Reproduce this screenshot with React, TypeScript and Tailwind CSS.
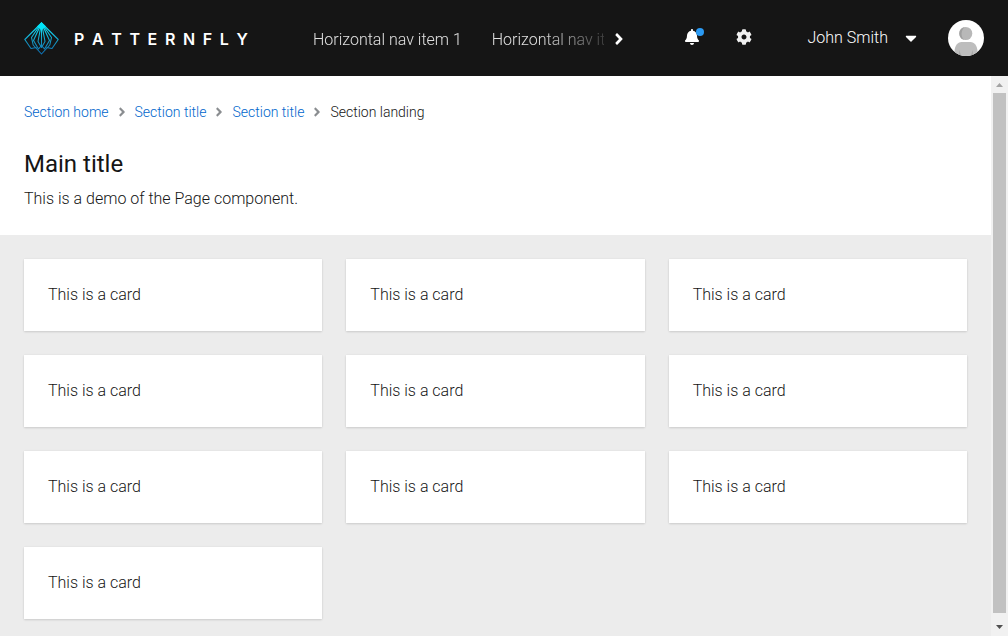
import React from "react";
import { FaAngleRight, FaBell, FaCaretDown, FaCog } from "react-icons/fa";

const crumbs = ["Section home", "Section title", "Section title"];
const navItems = ["Horizontal nav item 1", "Horizontal nav item 2"];
const cards = Array.from({ length: 10 }, (_, i) => i);

function Logo() {
  return (
    <a href="#home" aria-label="PatternFly" className="flex shrink-0 items-center gap-[15px] text-white">
      <svg width="35" height="34" viewBox="0 0 35 34" fill="none" stroke="url(#fan)" strokeWidth="1.1" strokeLinejoin="round" aria-hidden="true">
        <defs>
          <linearGradient id="fan" gradientUnits="userSpaceOnUse" x1="17.5" y1="0" x2="17.5" y2="34">
            <stop offset="0" stopColor="#00f0ff" />
            <stop offset="0.3" stopColor="#12cdea" />
            <stop offset="0.65" stopColor="#1590bd" />
            <stop offset="1" stopColor="#0b6fb8" />
          </linearGradient>
        </defs>
        <path d="M17.5 2 L0.8 18.5 L7 27.5 L12.5 26.5" />
        <path d="M17.5 2 L34.2 18.5 L28 27.5 L22.5 26.5" />
        <path d="M17.5 2 L7.5 16.5 L9.2 24 L17.5 33 L25.8 24 L27.5 16.5 Z" />
        <path d="M17.5 2 L9.5 19.5 L14.5 28 L17.5 24.5 L20.5 28 L25.5 19.5 Z" />
        <path d="M17.5 2 L14 20.5 L17.5 26.5 L21 20.5 Z" />
        <path d="M17.5 2 V26.5" />
        <path d="M17.5 1.2 L13 5.5 L17.5 9 L22 5.5 Z" fill="#00e4f8" stroke="none" />
      </svg>
      <span aria-hidden="true" className="flex w-[174px] justify-between pt-0.5 font-['Inter',sans-serif] text-base leading-6 font-semibold">
        {"PATTERNFLY".split("").map((c, i) => (
          <span key={i}>{c}</span>
        ))}
      </span>
    </a>
  );
}

function Avatar() {
  return (
    <svg className="size-9 shrink-0" viewBox="0 0 36 36" role="img" aria-label="John Smith">
      <defs>
        <clipPath id="round"><circle cx="18" cy="18" r="18" /></clipPath>
      </defs>
      <circle cx="18" cy="18" r="18" fill="#fff" />
      <g clipPath="url(#round)">
        <path d="M6.5 36 V31 C7 25.5 9.5 22 13.5 22 H22.5 C26.5 22 29 25.5 29.5 31 V36 Z" fill="#bdbdbd" />
        <path d="M11.5 30 L13 36 H11 Z M24.5 30 L25 36 H23 Z" fill="#a3a3a3" />
        <circle cx="17.7" cy="13.5" r="6.6" fill="#b8b8b8" />
        <path d="M17 7 A6.6 6.6 0 0 0 16 19.8 C12.5 16.5 12.8 10 17 7 Z" fill="#a0a0a0" />
      </g>
    </svg>
  );
}

function ScrollTrack() {
  return (
    <div aria-hidden="true" className="flex w-[17px] shrink-0 flex-col items-center bg-[#f1f1f1]">
      <svg width="17" height="17" viewBox="0 0 17 17"><path d="M5 11 L8.5 7 L12 11 Z" fill="#a3a3a3" /></svg>
      <div className="w-[13px] grow bg-[#c1c1c1]" />
      <svg width="17" height="23" viewBox="0 0 17 23"><path d="M5 12 H12 L8.5 16 Z" fill="#505050" /></svg>
    </div>
  );
}

export default function App() {
  return (
    <div className="flex h-screen flex-col bg-white font-['Roboto',sans-serif] text-base font-light text-[#151515]">
      <header className="flex h-19 shrink-0 items-center bg-[#151515] px-6 text-white">
        <Logo />
        <div className="ml-[65px] flex min-w-0 flex-1 items-center">
          <nav aria-label="Global" className="min-w-0 flex-1 overflow-hidden [mask-image:linear-gradient(to_left,rgb(0_0_0/0.2),black_64px)]">
            <ul className="flex gap-[30px] pt-1 whitespace-nowrap text-[#e0e0e0]">
              {navItems.map((item) => (
                <li key={item}><a href="#nav">{item}</a></li>
              ))}
            </ul>
          </nav>
          <button type="button" aria-label="Scroll right" className="flex w-[30px] shrink-0 justify-center pt-0.5"><FaAngleRight className="size-[18px]" /></button>
        </div>
        <div className="ml-[50px] flex shrink-0 items-center">
          <button type="button" aria-label="Notifications" className="relative mb-0.5">
            <FaBell className="size-4" />
            <span className="absolute -top-px -right-1 size-2 rounded-full bg-[#2b9af3]" />
          </button>
          <button type="button" aria-label="Settings" className="mb-0.5 ml-9 text-[#f0f0f0]"><FaCog className="size-4" /></button>
          <button type="button" className="ml-14 flex items-center gap-3.5 whitespace-nowrap">
            John Smith
            <FaCaretDown className="size-[18px]" />
          </button>
        </div>
        <div className="ml-7 shrink-0"><Avatar /></div>
      </header>
      <div className="flex min-h-0 flex-1">
        <main className="min-w-0 flex-1 overflow-y-auto bg-[#ececec] [scrollbar-width:none]">
          <section className="bg-white p-6">
            <nav aria-label="Breadcrumb">
              <ol className="flex flex-wrap items-center text-sm leading-6">
                {crumbs.map((c, i) => (
                  <li key={i} className="flex items-center">
                    <a href="#section" className="text-[#0066cc]">{c}</a>
                    <FaAngleRight className="mx-1.5 size-3.5 text-[#8a8d90]" aria-hidden="true" />
                  </li>
                ))}
                <li aria-current="page">Section landing</li>
              </ol>
            </nav>
            <h1 className="mt-6 text-2xl leading-8 font-normal">Main title</h1>
            <p className="mt-[7px] leading-6">This is a demo of the Page component.</p>
          </section>
          <section className="grid grid-cols-3 gap-6 p-6">
            {cards.map((i) => (
              <article key={i} className="bg-white p-6 leading-6 shadow-[0_1px_2px_rgb(3_3_3/0.12),0_0_2px_rgb(3_3_3/0.06)]">This is a card</article>
            ))}
          </section>
        </main>
        <ScrollTrack />
      </div>
    </div>
  );
}
